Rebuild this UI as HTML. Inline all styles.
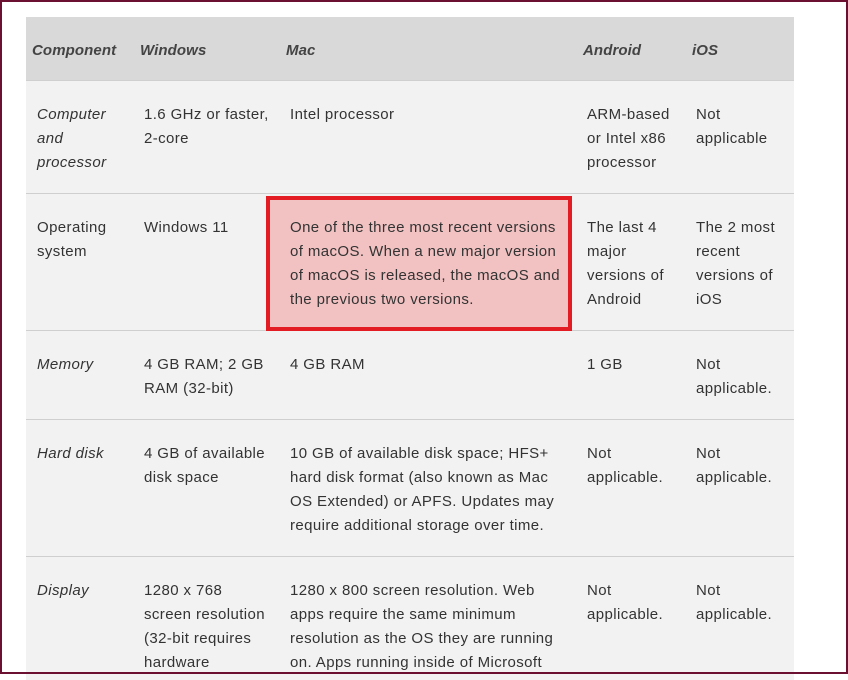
<!DOCTYPE html>
<html><head><meta charset="utf-8"><style>
*{margin:0;padding:0;box-sizing:border-box}
body{width:848px;height:674px;overflow:hidden;background:#fff;font-family:"Liberation Sans",Arial,sans-serif;font-size:15px;color:#333;position:relative}
.frame{position:absolute;left:0;top:0;width:848px;height:674px;border:2px solid #6b1030;z-index:5}
.bg{position:absolute;left:26px;width:768px}
.t{position:absolute;line-height:24px;white-space:nowrap;letter-spacing:0.4px}
.i{font-style:italic}
.h{font-style:italic;font-weight:bold;color:#444;letter-spacing:0.1px}
.sep{position:absolute;left:26px;width:768px;height:1px;background:#cfcfcf}
</style></head><body>
<div class="frame"></div>
<div class="bg" style="top:17px;height:63px;background:#d9d9d9"></div>
<div class="bg" style="top:80px;height:600px;background:#f2f2f2"></div>
<div class="sep" style="top:80px"></div>
<div class="sep" style="top:193px"></div>
<div class="sep" style="top:330px"></div>
<div class="sep" style="top:419px"></div>
<div class="sep" style="top:556px"></div>
<div style="position:absolute;left:266px;top:196px;width:306px;height:135px;background:#f2c2c2;border:4px solid #e31b23"></div>

<div class="t h" style="left:32px;top:39px">Component</div>
<div class="t h" style="left:140px;top:39px">Windows</div>
<div class="t h" style="left:286px;top:39px">Mac</div>
<div class="t h" style="left:583px;top:39px">Android</div>
<div class="t h" style="left:692px;top:39px">iOS</div>

<div class="t i" style="left:37px;top:103px">Computer<br>and<br>processor</div>
<div class="t" style="left:144px;top:103px">1.6 GHz or faster,<br>2-core</div>
<div class="t" style="left:290px;top:103px">Intel processor</div>
<div class="t" style="left:587px;top:103px">ARM-based<br>or Intel x86<br>processor</div>
<div class="t" style="left:696px;top:103px">Not<br>applicable</div>

<div class="t" style="left:37px;top:216px">Operating<br>system</div>
<div class="t" style="left:144px;top:216px">Windows 11</div>
<div class="t" style="left:290px;top:216px">One of the three most recent versions<br>of macOS. When a new major version<br>of macOS is released, the macOS and<br>the previous two versions.</div>
<div class="t" style="left:587px;top:216px">The last 4<br>major<br>versions of<br>Android</div>
<div class="t" style="left:696px;top:216px">The 2 most<br>recent<br>versions of<br>iOS</div>

<div class="t i" style="left:37px;top:353px">Memory</div>
<div class="t" style="left:144px;top:353px">4 GB RAM; 2 GB<br>RAM (32-bit)</div>
<div class="t" style="left:290px;top:353px">4 GB RAM</div>
<div class="t" style="left:587px;top:353px">1 GB</div>
<div class="t" style="left:696px;top:353px">Not<br>applicable.</div>

<div class="t i" style="left:37px;top:442px">Hard disk</div>
<div class="t" style="left:144px;top:442px">4 GB of available<br>disk space</div>
<div class="t" style="left:290px;top:442px">10 GB of available disk space; HFS+<br>hard disk format (also known as Mac<br>OS Extended) or APFS. Updates may<br>require additional storage over time.</div>
<div class="t" style="left:587px;top:442px">Not<br>applicable.</div>
<div class="t" style="left:696px;top:442px">Not<br>applicable.</div>

<div class="t i" style="left:37px;top:579px">Display</div>
<div class="t" style="left:144px;top:579px">1280 x 768<br>screen resolution<br>(32-bit requires<br>hardware</div>
<div class="t" style="left:290px;top:579px">1280 x 800 screen resolution. Web<br>apps require the same minimum<br>resolution as the OS they are running<br>on. Apps running inside of Microsoft</div>
<div class="t" style="left:587px;top:579px">Not<br>applicable.</div>
<div class="t" style="left:696px;top:579px">Not<br>applicable.</div>
</body></html>
